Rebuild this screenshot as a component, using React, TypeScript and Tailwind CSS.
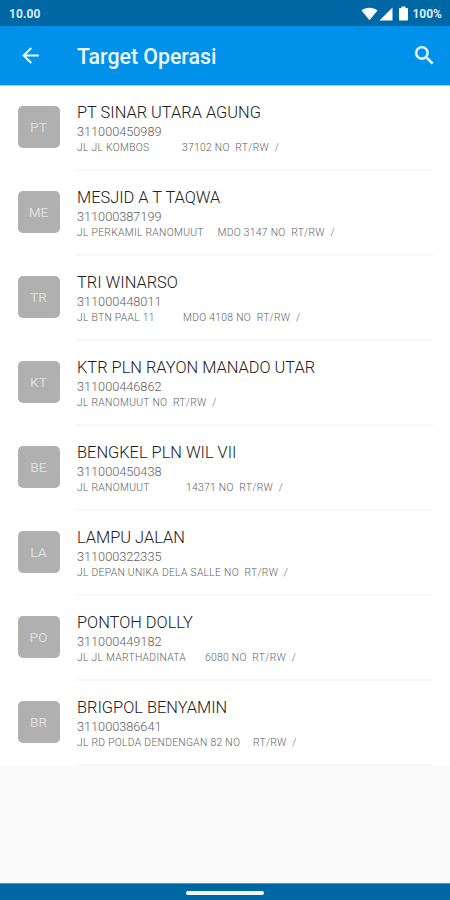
type Customer = {
  initials: string;
  name: string;
  id: string;
  street: string;
  streetWidth?: number;
  detail?: string;
};

const customers: Customer[] = [
  { initials: 'PT', name: 'PT SINAR UTARA AGUNG', id: '311000450989', street: 'JL JL KOMBOS', streetWidth: 105, detail: '37102 NO  RT/RW  /' },
  { initials: 'ME', name: 'MESJID A T TAQWA', id: '311000387199', street: 'JL PERKAMIL RANOMUUT', streetWidth: 140.5, detail: 'MDO 3147 NO  RT/RW  /' },
  { initials: 'TR', name: 'TRI WINARSO', id: '311000448011', street: 'JL BTN PAAL 11', streetWidth: 106, detail: 'MDO 4108 NO  RT/RW  /' },
  { initials: 'KT', name: 'KTR PLN RAYON MANADO UTAR', id: '311000446862', street: 'JL RANOMUUT NO  RT/RW  /' },
  { initials: 'BE', name: 'BENGKEL PLN WIL VII', id: '311000450438', street: 'JL RANOMUUT', streetWidth: 109, detail: '14371 NO  RT/RW  /' },
  { initials: 'LA', name: 'LAMPU JALAN', id: '311000322335', street: 'JL DEPAN UNIKA DELA SALLE NO  RT/RW  /' },
  { initials: 'PO', name: 'PONTOH DOLLY', id: '311000449182', street: 'JL JL MARTHADINATA', streetWidth: 128, detail: '6080 NO  RT/RW  /' },
  { initials: 'BR', name: 'BRIGPOL BENYAMIN', id: '311000386641', street: 'JL RD POLDA DENDENGAN 82 NO', streetWidth: 176, detail: 'RT/RW  /' },
];

function StatusBar() {
  return (
    <div className="flex h-[26px] shrink-0 items-center justify-between bg-[#0067a5] pl-[9px] pr-[8px] pt-px text-[12px] font-bold text-[#dcebf6]">
      <span className="tracking-[0.1px]">10.00</span>
      <div className="flex items-center">
        <svg width="17" height="14" viewBox="0 0 17 14" fill="#fff">
          <path d="M0.5 3.6 C5 -0.2 12 -0.2 16.5 3.6 L8.5 13.3 Z" />
        </svg>
        <svg className="ml-px" width="14" height="14" viewBox="0 0 14 14" fill="#fff">
          <path d="M13.5 0.5 V13.5 H0.5 Z" />
        </svg>
        <svg className="ml-[6px]" width="9" height="15" viewBox="0 0 9 15" fill="#fff">
          <path d="M2.5 0.5 H6.5 V2 H8 Q9 2 9 3 V13.5 Q9 14.5 8 14.5 H1 Q0 14.5 0 13.5 V3 Q0 2 1 2 H2.5 Z" />
        </svg>
        <span className="ml-[4px]">100%</span>
      </div>
    </div>
  );
}

function AppBar() {
  return (
    <header className="flex h-[59px] shrink-0 items-center bg-[#0091ea] pl-[18px] pr-[13px] text-[#eef8ff]">
      <svg className="-mt-px" width="25" height="25" viewBox="0 0 24 24" fill="currentColor">
        <path d="M20 11H7.83l5.59-5.59L12 4l-8 8 8 8 1.41-1.41L7.83 13H20v-2z" />
      </svg>
      <h1 className="ml-[34px] mt-[2px] grow text-[21.3px] font-medium leading-none">Target Operasi</h1>
      <svg className="-mt-px" width="25" height="25" viewBox="0 0 24 24" fill="currentColor" stroke="currentColor" strokeWidth="0.4">
        <path d="M15.5 14h-.79l-.28-.27A6.471 6.471 0 0 0 16 9.5 6.5 6.5 0 1 0 9.5 16c1.61 0 3.09-.59 4.23-1.57l.27.28v.79l5 4.99L20.49 19l-4.99-5zm-6 0C7.01 14 5 11.99 5 9.5S7.01 5 9.5 5 14 7.01 14 9.5 11.99 14 9.5 14z" />
      </svg>
    </header>
  );
}

function CustomerRow({ customer }: { customer: Customer }) {
  return (
    <li className="flex h-[85px] bg-white pl-[18px] pr-[17px]">
      <div className="mt-[20px] flex size-[42px] shrink-0 items-center justify-center rounded-[5px] bg-[#b0b0b0] pr-px pt-px text-[13.7px] text-[#dedede]">
        {customer.initials}
      </div>
      <div className="ml-[16px] grow whitespace-pre border-b-2 border-[#f7f7f7] pl-px pt-[17px] font-light">
        <div className="text-[16.4px] leading-[20px] text-[#202020]">{customer.name}</div>
        <div className="text-[12.7px] leading-[17px] text-[#606060]">{customer.id}</div>
        <div className="flex text-[10.3px] leading-[15px] tracking-[0.3px] text-[#606060]">
          <span style={{ width: customer.streetWidth }}>{customer.street}</span>
          {customer.detail && <span>{customer.detail}</span>}
        </div>
      </div>
    </li>
  );
}

export default function App() {
  return (
    <div className="flex h-[900px] w-[450px] flex-col overflow-hidden bg-[#fafafa] font-['Roboto',sans-serif]">
      <StatusBar />
      <AppBar />
      <ul className="grow border-t border-[#9fd4f8]">
        {customers.map((customer) => (
          <CustomerRow key={customer.id} customer={customer} />
        ))}
      </ul>
      <div className="flex h-[17px] shrink-0 items-center justify-center border-t border-[#5a93bd] bg-[#0067a5] pt-[2px]">
        <div className="h-[4px] w-[78px] rounded-full bg-[#f2f7fb]" />
      </div>
    </div>
  );
}
